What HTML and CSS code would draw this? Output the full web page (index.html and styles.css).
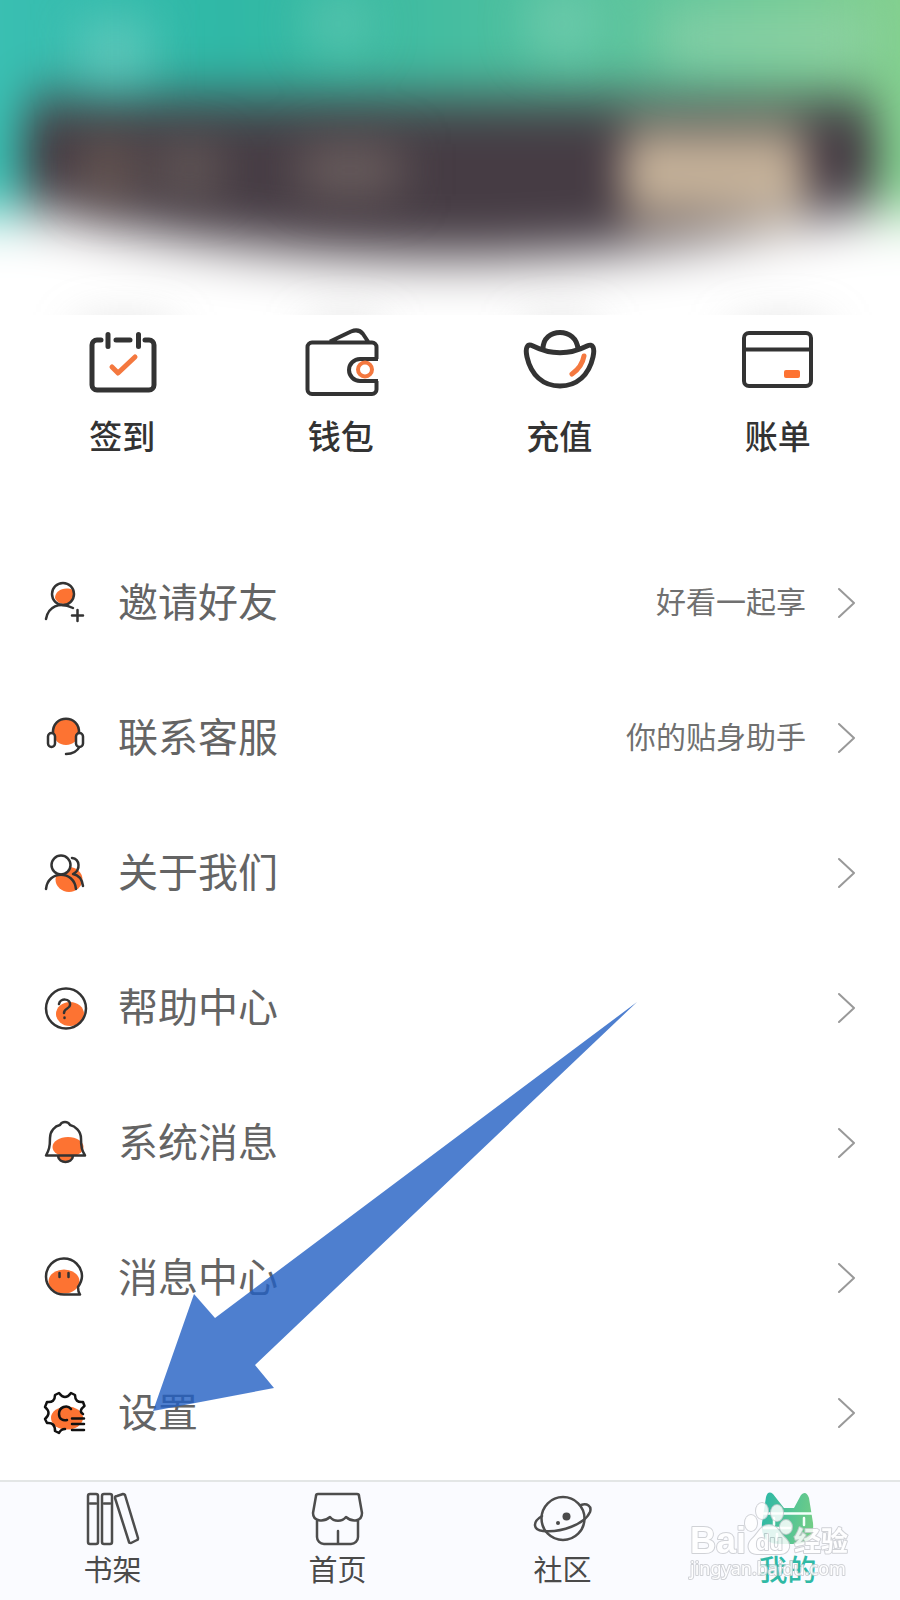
FILE: index.html
```html
<!DOCTYPE html>
<html lang="zh-CN">
<head>
<meta charset="utf-8">
<meta name="viewport" content="width=device-width, initial-scale=1">
<title>我的</title>
<link rel="stylesheet" href="styles.css">
</head>
<body>
<div class="page">
  <header class="hero">
    <svg class="hero-art" viewBox="0 0 900 315" preserveAspectRatio="none" aria-hidden="true">
      <defs>
        <linearGradient id="sky" gradientUnits="userSpaceOnUse" x1="0" y1="30" x2="900" y2="0">
          <stop offset="0" stop-color="#3abfb2"/>
          <stop offset=".25" stop-color="#2fb8a6"/>
          <stop offset=".5" stop-color="#45bda0"/>
          <stop offset=".75" stop-color="#62c69c"/>
          <stop offset="1" stop-color="#84d08f"/>
        </linearGradient>
        <filter id="soft" filterUnits="userSpaceOnUse" x="-100" y="-100" width="1100" height="520" color-interpolation-filters="sRGB"><feGaussianBlur stdDeviation="20 27"/></filter>
        <filter id="softer" filterUnits="userSpaceOnUse" x="-100" y="-100" width="1100" height="520" color-interpolation-filters="sRGB"><feGaussianBlur stdDeviation="24"/></filter>
      </defs>
      <g filter="url(#soft)">
        <rect x="-90" y="-90" width="1080" height="500" fill="#fff"/>
        <rect x="-90" y="-90" width="1080" height="304" fill="url(#sky)"/>
        <path d="M46 98H854Q876 98 876 120V206Q660 258 450 258T24 206V120Q24 98 46 98Z" fill="#463c44"/>
        <rect x="622" y="130" width="184" height="86" rx="20" fill="#ccb89e"/>
      </g>
      <g filter="url(#softer)">
        <rect x="80" y="20" width="70" height="64" fill="#78d0c4" opacity=".6"/>
        <circle cx="338" cy="24" r="30" fill="#6dccb6" opacity=".6"/>
        <circle cx="562" cy="24" r="34" fill="#80d0b6" opacity=".6"/>
        <rect x="660" y="14" width="210" height="50" fill="#9bd4ad" opacity=".6"/>
        <rect x="84" y="140" width="46" height="60" fill="#85705f" opacity=".6"/>
        <rect x="160" y="144" width="60" height="50" fill="#746862" opacity=".7"/>
        <rect x="300" y="144" width="100" height="52" fill="#7b6e69" opacity=".7"/>
        <rect x="80" y="326" width="90" height="30" fill="#999" opacity=".4"/>
        <rect x="310" y="326" width="70" height="30" fill="#999" opacity=".4"/>
        <rect x="525" y="326" width="70" height="30" fill="#999" opacity=".4"/>
        <rect x="735" y="326" width="90" height="30" fill="#999" opacity=".4"/>
      </g>
    </svg>
  </header>

  <main>
    <section class="quick">
      <a class="quick-item" href="#">
        <svg class="quick-icon" viewBox="0 0 76 72" aria-hidden="true">
          <path class="ink" d="M17 14h-4a5 5 0 0 0-5 5v40a5 5 0 0 0 5 5h52a5 5 0 0 0 5-5V19a5 5 0 0 0-5-5h-4M32 14h14M24 8.500v12M54.500 8.500v12"/>
          <path class="accent bold" d="M28 41l6 6 17-16"/>
        </svg>
        <span>签到</span>
      </a>
      <a class="quick-item" href="#">
        <svg class="quick-icon thin" viewBox="0 0 76 72" aria-hidden="true">
          <path class="ink butt" d="M73.500 33V21a4.500 4.500 0 0 0-4.500-4.500H9A4.500 4.500 0 0 0 4.500 21v42.500A4.500 4.500 0 0 0 9 68h60a4.500 4.500 0 0 0 4.500-4.500V55M75 33H57a11 11 0 0 0 0 22h18M27 15.500L48 5.500c5-2 9-1.500 12 2.500l5 7.500"/>
          <circle class="accent" cx="62" cy="43.500" r="7"/>
        </svg>
        <span>钱包</span>
      </a>
      <a class="quick-item" href="#">
        <svg class="quick-icon" viewBox="0 0 76 72" aria-hidden="true">
          <path class="ink" d="M12 20C6 17 4 22 6 31c4 18 16 29 33 29s29-11 33-29c2-9 0-14-6-11-18 9-36 9-54 0zM22 23C22 12 30 6.500 39 6.500S56 12 57 23"/>
          <path class="accent bold" d="M63 30Q61 41 51 48"/>
        </svg>
        <span>充值</span>
      </a>
      <a class="quick-item" href="#">
        <svg class="quick-icon thin" viewBox="0 0 76 72" aria-hidden="true">
          <path class="ink" d="M9 7h57a5 5 0 0 1 5 5v43a5 5 0 0 1-5 5H9a5 5 0 0 1-5-5V12a5 5 0 0 1 5-5zM4 23.500h67"/>
          <rect class="blob" x="44" y="44" width="16" height="8" rx="2"/>
        </svg>
        <span>账单</span>
      </a>
    </section>

    <nav class="menu" aria-label="功能">
      <a class="row" href="#">
        <svg class="row-icon" viewBox="0 0 44 44" aria-hidden="true">
          <path class="blob" d="M11 17c0-7 9-12 18-8 3 8-3 14-9 14-4 0-8-3-9-6z"/>
          <circle class="line" cx="19" cy="13" r="11"/>
          <path class="line" d="M2 38C4 26 15 20 29 27M33.500 29v11M28 34.500h11"/>
        </svg>
        <span class="label">邀请好友</span><span class="hint">好看一起享</span>
        <svg class="chevron" viewBox="0 0 18 32" aria-hidden="true"><path d="M1 2l15 14L1 30"/></svg>
      </a>
      <a class="row" href="#">
        <svg class="row-icon" viewBox="0 0 44 44" aria-hidden="true">
          <circle class="blob" cx="22" cy="16" r="13"/>
          <path class="line" d="M9 17C8-2 36-2 35 17M36 30c-3 6-7 8-14 8"/>
          <rect class="line" x="4" y="17" width="7" height="14" rx="3.500" fill="#fff"/>
          <rect class="line" x="32" y="17" width="7" height="14" rx="3.500" fill="#fff"/>
        </svg>
        <span class="label">联系客服</span><span class="hint">你的贴身助手</span>
        <svg class="chevron" viewBox="0 0 18 32" aria-hidden="true"><path d="M1 2l15 14L1 30"/></svg>
      </a>
      <a class="row" href="#">
        <svg class="row-icon" viewBox="0 0 44 44" aria-hidden="true">
          <ellipse class="blob" cx="25" cy="28.500" rx="13.500" ry="12.500"/>
          <circle cx="17" cy="14" r="9.500" fill="#fff"/>
          <circle class="line" cx="17" cy="14" r="9.500"/>
          <path class="line" d="M2 38c2-19 28-19 30 0M28 7c8 1 9 12 1 16 6 1 9 5 10 12"/>
        </svg>
        <span class="label">关于我们</span>
        <svg class="chevron" viewBox="0 0 18 32" aria-hidden="true"><path d="M1 2l15 14L1 30"/></svg>
      </a>
      <a class="row" href="#">
        <svg class="row-icon" viewBox="0 0 44 44" aria-hidden="true">
          <ellipse class="blob" cx="26" cy="28" rx="14" ry="12"/>
          <circle class="line" cx="22" cy="22.500" r="20"/>
          <path class="line" d="M15 18c1-6 12-6 11 1 0 4-6 3-6 8M20.500 31.500v.5"/>
        </svg>
        <span class="label">帮助中心</span>
        <svg class="chevron" viewBox="0 0 18 32" aria-hidden="true"><path d="M1 2l15 14L1 30"/></svg>
      </a>
      <a class="row" href="#">
        <svg class="row-icon" viewBox="0 0 44 44" aria-hidden="true">
          <ellipse class="blob" cx="24" cy="26" rx="15.500" ry="10"/>
          <path class="blob" d="M14 34h15c0 9-15 9-15 0z"/>
          <path class="line" d="M2 34.500h39c-3-5-4-8-4-17C37 10 31 5 26 4c-2-4-8-4-10 0C11 5 6 10 6 17c0 9-1 12-4 17.500zM14 35c1 8 14 8 15 0"/>
        </svg>
        <span class="label">系统消息</span>
        <svg class="chevron" viewBox="0 0 18 32" aria-hidden="true"><path d="M1 2l15 14L1 30"/></svg>
      </a>
      <a class="row" href="#">
        <svg class="row-icon" viewBox="0 0 44 44" aria-hidden="true">
          <ellipse class="blob" cx="20" cy="25.500" rx="15.500" ry="12"/>
          <path class="line" d="M36 38.500H20A18 18 0 1 1 38 20c0 5-2 8-4 11 0 3 0 5 2 7.500zM15.500 17v4M24.500 17v4"/>
        </svg>
        <span class="label">消息中心</span>
        <svg class="chevron" viewBox="0 0 18 32" aria-hidden="true"><path d="M1 2l15 14L1 30"/></svg>
      </a>
      <a class="row" href="#">
        <svg class="row-icon" viewBox="0 0 44 44" aria-hidden="true">
          <ellipse class="blob" cx="23" cy="27" rx="16" ry="11.500"/>
          <path class="line dark" d="M39 23q-5-3 1.500-8L39 11q-8 1-8-7l-4-2q-6 8-12 0l-4 2q0 8-8 7l-2 5q7 6 0 12l2 4q8-1 8 8l4 2q2-4 6-4M27 18c-4-5-12-2-12 5 0 5 4 7 8 6M28 27.500h12M28 33h12M28 39h12"/>
        </svg>
        <span class="label">设置</span>
        <svg class="chevron" viewBox="0 0 18 32" aria-hidden="true"><path d="M1 2l15 14L1 30"/></svg>
      </a>
      <svg class="pointer" viewBox="0 0 484 409" aria-hidden="true"><path d="M484 0L62 316 41 292 0 409 121 386 102 363z"/></svg>
    </nav>
  </main>

  <nav class="tabs" aria-label="主导航">
    <a class="tab" href="#">
      <svg class="tab-icon" viewBox="0 0 56 56" aria-hidden="true">
        <rect x="3" y="3" width="10" height="50" rx="2"/><rect x="17" y="3" width="10" height="50" rx="2"/>
        <path d="M5 12.500h6M19 12.500h6M32 5l6-2q1 0 2 1l13 43q0 2-1 2l-6 3q-2 0-2-1L30 7q0-2 2-2z"/>
      </svg>
      <span>书架</span>
    </a>
    <a class="tab" href="#">
      <svg class="tab-icon" viewBox="0 0 56 56" aria-hidden="true">
        <path d="M8 3h39q2 0 2 2l3 17c0 8-9 10-16 4-4 5-12 5-16 0-7 6-17 4-17-4L6 5q0-2 2-2zM7 29v17a7 7 0 0 0 7 7h27a7 7 0 0 0 7-7V29M28 40v13"/>
      </svg>
      <span>首页</span>
    </a>
    <a class="tab" href="#">
      <svg class="tab-icon" viewBox="0 0 56 56" aria-hidden="true">
        <circle cx="28" cy="27.500" r="21.500"/>
        <path d="M7 25C-3 31-2 39 8 40c18 2 42-7 47-19 2-6-3-9-9-7"/>
        <circle class="dot" cx="31.500" cy="25.500" r="4"/><circle class="dot" cx="23" cy="32" r="2"/>
      </svg>
      <span>社区</span>
    </a>
    <a class="tab active" href="#" aria-current="page">
      <svg class="tab-icon" viewBox="0 0 56 56" aria-hidden="true">
        <defs><linearGradient id="cat" x1="0" x2="1" y1=".4" y2=".6"><stop offset="0" stop-color="#2fb9a5"/><stop offset="1" stop-color="#72cd86"/></linearGradient></defs>
        <path class="cat" d="M2 32L6 6Q8-1 13 3L24 17h10L41 4q5-5 8 3l4 25q2 21-18 21H20Q0 53 2 32z"/>
        <path class="slit" d="M4 22.500h48M4 37h26M14 27v7M44 27v7M8 43v6M17 43v6"/>
      </svg>
      <span>我的</span>
    </a>
    <svg class="mark" viewBox="0 0 170 84" role="img" aria-label="Baidu 经验">
      <text class="mark-latin" x="4" y="53">Bai</text>
      <g class="paw">
        <ellipse cx="65" cy="23" rx="6" ry="8"/><ellipse cx="76" cy="11" rx="6" ry="8"/><ellipse cx="91" cy="13" rx="6" ry="8"/><ellipse cx="100" cy="27" rx="6" ry="7"/>
        <path d="M83 25c9 0 11 9 17 14 6 6 3 15-6 15H71c-9 0-11-9-5-15 6-5 8-14 17-14z"/>
      </g>
      <text class="mark-du" x="70" y="50">du</text>
      <text class="mark-cjk" x="108" y="51">经验</text>
      <text class="mark-url" x="4" y="75">jingyan.baidu.com</text>
    </svg>
  </nav>
</div>
</body>
</html>
```
FILE: styles.css
```css
* { box-sizing: border-box; }

body {
  margin: 0;
  background: #fff;
  color: #333;
  font-family: "Liberation Sans", "Noto Sans CJK SC", sans-serif;
}

a { color: inherit; text-decoration: none; }
svg { display: block; flex: none; fill: none; stroke-linecap: round; stroke-linejoin: round; }

.page { display: flex; flex-direction: column; min-height: 100vh; }

.hero-art { width: 100%; height: 315px; }

.quick {
  display: grid;
  grid-template-columns: repeat(4, 1fr);
  height: 220px;
  padding: 11px 13px 0;
}
.quick-item {
  display: flex;
  flex-direction: column;
  align-items: center;
  gap: 16px;
  font-size: 33px;
  font-weight: 500;
  line-height: 48px;
}
.quick-icon { width: 76px; height: 72px; }
.ink { stroke: #333; stroke-width: 5; }
.thin .ink { stroke-width: 4; }
.butt { stroke-linecap: butt; }
.accent { stroke: #f4783f; stroke-width: 4; }
.bold { stroke-width: 5; }
.blob { fill: #fd7332; }

.menu { position: relative; }
.row {
  display: flex;
  align-items: center;
  height: 135px;
  padding: 0 44px;
}
.row-icon { width: 44px; height: 44px; overflow: visible; }
.line { stroke: #333; stroke-width: 2.5; }
.dark { stroke: #111; }
.label {
  flex: 1;
  padding-left: 30px;
  color: #646464;
  font-size: 40px;
  line-height: 56px;
}
.hint { padding-right: 32px; color: #707070; font-size: 30px; line-height: 44px; }
.chevron { width: 18px; height: 32px; stroke: #999; stroke-width: 2; }

.pointer {
  position: absolute;
  left: 153px;
  top: 467px;
  width: 484px;
  height: 409px;
  fill: #2360c4;
  opacity: .8;
  pointer-events: none;
}

.tabs {
  position: relative;
  display: grid;
  grid-template-columns: repeat(4, 1fr);
  height: 120px;
  border-top: 2px solid #e3e6e6;
  background: #fafbff;
}
.tab {
  display: flex;
  flex-direction: column;
  align-items: center;
  padding-top: 9px;
  gap: 4px;
  color: #4a4a4a;
  font-size: 29px;
  line-height: 40px;
}
.tab-icon { width: 56px; height: 56px; stroke: #4d4d4d; stroke-width: 2.5; overflow: visible; }
.dot { fill: #4a4a4a; stroke: none; }
.active { color: #2fb9a5; font-weight: 500; }
.cat { fill: url(#cat); stroke: none; }
.slit { stroke: #f4fffb; stroke-width: 2.5; }

.mark {
  position: absolute;
  right: 44px;
  bottom: 16px;
  width: 170px;
  height: 84px;
  pointer-events: none;
  fill: #fff;
  stroke: #c9cbd0;
  stroke-width: 2;
  paint-order: stroke;
  opacity: .85;
}
.mark-latin { font: bold 36px "Liberation Sans", sans-serif; }
.mark-du { font: bold 22px "Liberation Sans", sans-serif; }
.mark-cjk { font: bold 27px "Noto Sans CJK SC", sans-serif; }
.mark-url { font: 18px "Noto Sans", sans-serif; }
```
